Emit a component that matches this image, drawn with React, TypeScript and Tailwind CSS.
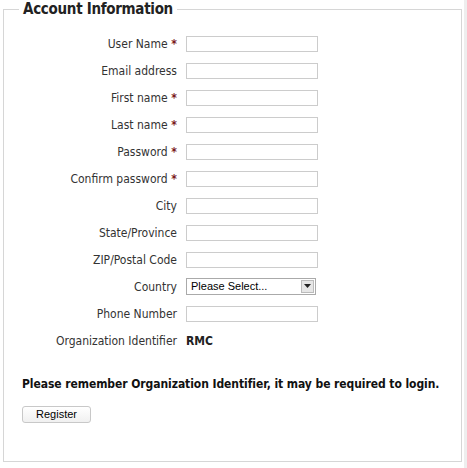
import React from "react";

const fields: { label: string; req?: boolean; type?: string }[] = [
  { label: "User Name", req: true },
  { label: "Email address" },
  { label: "First name", req: true },
  { label: "Last name", req: true },
  { label: "Password", req: true },
  { label: "Confirm password", req: true },
  { label: "City" },
  { label: "State/Province" },
  { label: "ZIP/Postal Code" },
  { label: "Country", type: "select" },
  { label: "Phone Number" },
];

export default function App() {
  return (
    <div className="w-[467px] h-[468px] bg-white relative overflow-hidden" style={{ fontFamily: "'DejaVu Sans Condensed', Tahoma, 'DejaVu Sans', sans-serif" }}>
      <div className="absolute right-0 top-0 w-[3px] h-full bg-[#eeeeee]" />
      <fieldset className="ml-[3px] w-[459px] h-[462px] border border-[#d6d6d6] pl-0 pr-0 pb-0">
        <legend className="ml-[15px] px-[4px] text-[15px] leading-[19px] font-bold text-[#222] tracking-[-0.3px]">Account Information</legend>
        <div className="pt-[11px] flex flex-col">
          {fields.map((f) => (
            <div key={f.label} className="flex items-center h-[27px]">
              <div className="w-[173px] text-right text-[12px] text-[#333]">
                {f.label}
                {f.req && <span className="text-[#7a1a1a] font-bold"> *</span>}
              </div>
              <div className="ml-[9px]">
                {f.type === "select" ? (
                  <div className="w-[130px] h-[17px] border border-[#aaaaaa] bg-white flex items-center justify-between" style={{ fontFamily: "'Liberation Sans', Arial, sans-serif" }}>
                    <span className="text-[11px] text-black pl-[4px] leading-none">Please Select...</span>
                    <span className="w-[13px] h-[13px] mr-[1px] bg-[#e6e6e6] border border-[#bbbbbb] flex items-center justify-center">
                      <svg width="7" height="5" viewBox="0 0 7 5"><path d="M0 0h7L3.5 4z" fill="#222" /></svg>
                    </span>
                  </div>
                ) : (
                  <div className="w-[132px] h-[16px] border border-[#cccccc] bg-white" />
                )}
              </div>
            </div>
          ))}
          <div className="flex items-center h-[27px]">
            <div className="w-[173px] text-right text-[12px] text-[#333]">Organization Identifier</div>
            <div className="ml-[9px] text-[12px] font-bold text-[#222]">RMC</div>
          </div>
          <div className="mt-[21px] ml-[18px] text-[12px] font-bold text-[#111] whitespace-nowrap tracking-[-0.07px]">
            Please remember Organization Identifier, it may be required to login.
          </div>
          <div className="mt-[8px] ml-[18px]">
            <button className="w-[69px] h-[17px] border border-[#c8c8c8] rounded-[3px] bg-gradient-to-b from-white to-[#f0f0f0] text-[11px] text-black leading-none" style={{ fontFamily: "'Liberation Sans', Arial, sans-serif" }}>
              Register
            </button>
          </div>
        </div>
      </fieldset>
    </div>
  );
}
